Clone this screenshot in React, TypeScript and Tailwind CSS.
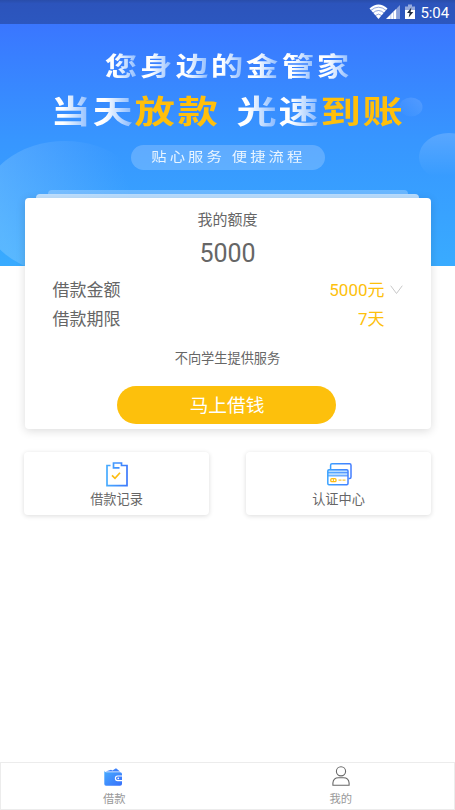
import type { ReactNode } from "react";

interface Glyph {
  char: string;
  gold?: boolean;
}

const headline: Glyph[] = [..."您身边的金管家"].map((char) => ({ char }));

const sloganLeft: Glyph[] = [
  { char: "当" },
  { char: "天" },
  { char: "放", gold: true },
  { char: "款", gold: true },
];

const sloganRight: Glyph[] = [
  { char: "光" },
  { char: "速" },
  { char: "到", gold: true },
  { char: "账", gold: true },
];

function StatusBar() {
  return (
    <div className="relative flex h-6 items-center justify-end bg-linear-to-b from-[#294daa] via-[#2c54bc] via-15% to-[#2c57bf] pr-[6px] text-white">
      <svg width="46" height="16" viewBox="0 0 46 16" className="mr-[5px]">
        <path d="M0.5 4.5 Q9.5 -3.5 18.5 4.5 L9.5 15 Z" fill="#fff" />
        <path
          d="M1.8 6.4 Q9.5 0 17.2 6.4 M3.8 9 Q9.5 4 15.2 9 M6.2 11.6 Q9.5 8.6 12.8 11.6"
          fill="none"
          stroke="#2c55bd"
          strokeOpacity="0.75"
          strokeWidth="0.7"
        />
        <path d="M28 15V4L31 1V15Z" fill="#fff" fillOpacity="0.45" />
        <path d="M17 15 L27.500 4.500 V15 Z" fill="#fff" />
        <path d="M24.5 8v7M21.8 10v5" stroke="#7f9ade" strokeWidth="0.5" />
        <path d="M39 0.5h4v2h3V8H36V2.500h3z" fill="#fff" fillOpacity="0.5" />
        <path d="M36 6h10v9H36z" fill="#fff" />
        <path d="M42.300 3.500 L38 9h2.600l-0.900 4.500L44.300 8h-2.700z" fill="#222c42" />
      </svg>
      <span className="mt-px text-[15px] leading-6 tracking-[-0.1px]">5:04</span>
    </div>
  );
}

function BannerBubbles() {
  return (
    <svg
      className="absolute inset-0"
      width="455"
      height="242"
      viewBox="0 24 455 242"
    >
      <defs>
        <linearGradient id="bubbleBig" x1="0.1" y1="0.6" x2="0.9" y2="0.4">
          <stop offset="0" stopColor="#8fd0ff" stopOpacity="0.38" />
          <stop offset="0.5" stopColor="#8fc8ff" stopOpacity="0.2" />
          <stop offset="1" stopColor="#8fc8ff" stopOpacity="0" />
        </linearGradient>
        <linearGradient id="bubbleSide" x1="0" y1="0" x2="0" y2="1">
          <stop offset="0" stopColor="#fff" stopOpacity="0.17" />
          <stop offset="0.9" stopColor="#fff" stopOpacity="0" />
        </linearGradient>
        <linearGradient id="bubbleSmall" x1="1" y1="0" x2="0" y2="1">
          <stop offset="0" stopColor="#fff" stopOpacity="0.14" />
          <stop offset="1" stopColor="#fff" stopOpacity="0" />
        </linearGradient>
      </defs>
      <ellipse cx="65" cy="207.500" rx="84" ry="66.500" fill="url(#bubbleBig)" />
      <ellipse cx="449" cy="157" rx="30" ry="24" fill="url(#bubbleSide)" />
      <ellipse cx="411" cy="107" rx="11.500" ry="9.500" fill="url(#bubbleSmall)" />
    </svg>
  );
}

function Headline() {
  return (
    <h1 className="flex h-[34px] justify-center pr-px text-[26px] leading-[34px] font-bold">
      {headline.map(({ char }) => (
        <span key={char} className="flex w-[35.3px] justify-center">
          <span className="scale-x-[1.25] bg-linear-to-r from-white from-35% to-[#8dbaff] bg-clip-text text-transparent">
            {char}
          </span>
        </span>
      ))}
    </h1>
  );
}

function Slogan({ glyphs }: { glyphs: Glyph[] }) {
  return (
    <span className="flex">
      {glyphs.map(({ char, gold }) => (
        <span key={char} className="flex w-[42.2px] justify-center">
          <span
            className={
              gold
                ? "scale-x-[1.28] text-[#ffbf0b]"
                : "scale-x-[1.28] bg-linear-to-r from-white from-30% to-[#82b5ff] bg-clip-text text-transparent"
            }
          >
            {char}
          </span>
        </span>
      ))}
    </span>
  );
}

function Banner() {
  return (
    <div className="relative h-[242px] overflow-hidden bg-linear-to-b from-[#3a76ff] via-[#3796ff] via-48% to-[#39abff]">
      <BannerBubbles />
      <div className="relative pt-[26px]">
        <Headline />
        <div className="mt-[9px] flex h-[40px] justify-center gap-[17px] pr-px text-[31.500px] leading-[40px] font-bold">
          <Slogan glyphs={sloganLeft} />
          <Slogan glyphs={sloganRight} />
        </div>
        <div className="mx-auto mt-[12px] flex h-[25px] w-[194px] items-center justify-center rounded-full bg-white/20 pl-[2px] text-[13px] text-[#eaf5ff]">
          <span className="-mt-px scale-x-[1.18] leading-6 tracking-[2.600px] whitespace-pre">
            贴心服务 便捷流程
          </span>
        </div>
      </div>
    </div>
  );
}

function LoanCard() {
  return (
    <div className="relative -mt-[76px]">
      <div className="mx-auto h-1 w-[360px] rounded-t bg-white/25" />
      <div className="mx-auto h-1 w-[383px] rounded-t bg-white/65" />
      <div className="mx-auto flex h-[231px] w-[406px] flex-col rounded-[4px] bg-white text-[#666] shadow-[0_2px_10px_rgba(0,0,0,0.14)]">
        <div className="mt-[10px] text-center text-[15px] leading-6">
          我的额度
        </div>
        <div className="mt-[6px] text-center text-[25px] leading-8">5000</div>
        <div className="mt-[7px] flex h-[28px] items-center pr-[28px] pl-[28px] text-[17px]">
          <span>借款金额</span>
          <span className="ml-auto text-[#fdc00c]">5000元</span>
          <svg width="13" height="10" viewBox="0 0 13 10" className="-mt-[2px] ml-[5px]">
            <path
              d="M0.700 0.700 L6.500 8.500 L12.300 0.700"
              fill="none"
              stroke="#c8c8c8"
            />
          </svg>
        </div>
        <div className="flex h-[29px] items-center justify-between pr-[46px] pl-[28px] text-[17px]">
          <span>借款期限</span>
          <span className="text-[#fdc00c]">7天</span>
        </div>
        <div className="mt-[13px] text-center text-[13.200px] leading-6">
          不向学生提供服务
        </div>
        <button className="mt-[15px] ml-[92.500px] h-[38px] w-[219px] rounded-full bg-[#fdc00c] pt-px pl-px text-[18.700px] leading-[38px] text-white">
          马上借钱
        </button>
      </div>
    </div>
  );
}

function RecordIcon() {
  return (
    <svg width="22" height="25" viewBox="0 0 22 25" fill="none">
      <defs>
        <linearGradient id="record" x1="0" y1="0" x2="22" y2="0" gradientUnits="userSpaceOnUse">
          <stop stopColor="#48adff" />
          <stop offset="1" stopColor="#3c78fb" />
        </linearGradient>
      </defs>
      <path
        d="M4.500 3.500H1V23.700H21V3.500H15.500V1H7.500V5.800H13.500"
        stroke="url(#record)"
        strokeWidth="1.700"
      />
      <path d="M6 13.300l3 3 5-5.500" stroke="#fdbd12" strokeWidth="1.700" />
    </svg>
  );
}

function CardsIcon() {
  return (
    <svg width="25" height="23" viewBox="0 0 25 23" fill="none" className="mb-px ml-px">
      <defs>
        <linearGradient id="cards" x1="0" y1="0" x2="25" y2="0" gradientUnits="userSpaceOnUse">
          <stop stopColor="#3ca4ff" />
          <stop offset="1" stopColor="#437cff" />
        </linearGradient>
      </defs>
      <path
        d="M3.600 6.500V2.200Q3.600 0.800 5 0.800H22.600Q24 0.800 24 2.200V14Q24 15.500 22.600 15.500H21.500"
        stroke="url(#cards)"
        strokeWidth="1.500"
      />
      <path d="M1 7h20v6H1z" fill="#b9dcff" />
      <rect x="0.800" y="6.800" width="20.200" height="15" rx="1.200" stroke="url(#cards)" strokeWidth="1.500" />
      <path d="M1 9.700h20M1 12.900h20" stroke="url(#cards)" strokeWidth="1" />
      <rect x="3.800" y="15.700" width="5.200" height="3" rx="1" stroke="#fdbd12" strokeWidth="1.300" />
      <path d="M6.400 15.700v3" stroke="#fdbd12" />
      <path d="M11.500 17.200h3M15.500 17.200h3" stroke="#fdc83d" strokeWidth="1.300" />
    </svg>
  );
}

function ShortcutCard({ label, children }: { label: string; children: ReactNode }) {
  return (
    <div className="flex h-[63px] w-[185px] flex-col items-center rounded-[4px] bg-white shadow-[0_1px_5px_rgba(0,0,0,0.14)]">
      <div className="flex h-[35px] items-end">{children}</div>
      <span className="mt-px text-[13.200px] leading-6 text-[#666]">{label}</span>
    </div>
  );
}

function WalletIcon() {
  return (
    <svg width="18" height="18" viewBox="0 0 18 18" className="mr-[2px]">
      <defs>
        <linearGradient id="wallet" x1="0" y1="0" x2="1" y2="1">
          <stop stopColor="#48acff" />
          <stop offset="1" stopColor="#376ffb" />
        </linearGradient>
      </defs>
      <path d="M1.500 3.500L7 1.700l1.500.8L12 0.200l2.500 2 1.500 1.300z" fill="#3d82fc" />
      <path
        d="M0.300 2.500Q0.500 4.200 2 4.200H16Q18 4.200 18 6V16Q18 17.700 16 17.700H2Q0.300 17.700 0.300 16Z"
        fill="url(#wallet)"
      />
      <path d="M18 8h-4.300a2.300 2.300 0 0 0 0 4.600H18" fill="#3d7dfc" stroke="#fff" strokeWidth="1.200" />
      <circle cx="14.300" cy="10.300" r="0.900" fill="#fff" />
    </svg>
  );
}

function PersonIcon() {
  return (
    <svg width="18" height="20" viewBox="0 0 18 20" fill="none" stroke="#686868" strokeWidth="1.100">
      <circle cx="9" cy="5.300" r="4.600" />
      <path d="M0.900 19.200V17Q1.300 11.700 6.500 11.700H11.500Q16.700 11.700 17.100 17V19.200Z" />
    </svg>
  );
}

function TabItem({ label, children }: { label: string; children: ReactNode }) {
  return (
    <div className="flex flex-1 flex-col items-center text-[11.300px] text-[#999]">
      <div className="flex h-[23px] items-end">{children}</div>
      <span className="mt-[6px] leading-4">{label}</span>
    </div>
  );
}

export default function App() {
  return (
    <div className="flex h-[810px] w-[455px] flex-col overflow-hidden bg-white font-[Roboto,'Noto_Sans_CJK_SC',sans-serif]">
      <StatusBar />
      <Banner />
      <LoanCard />
      <div className="mt-[23px] flex justify-between px-6">
        <ShortcutCard label="借款记录">
          <RecordIcon />
        </ShortcutCard>
        <ShortcutCard label="认证中心">
          <CardsIcon />
        </ShortcutCard>
      </div>
      <nav className="mt-auto flex h-[48px] border border-[#ececec] bg-white">
        <TabItem label="借款">
          <WalletIcon />
        </TabItem>
        <TabItem label="我的">
          <PersonIcon />
        </TabItem>
      </nav>
    </div>
  );
}
